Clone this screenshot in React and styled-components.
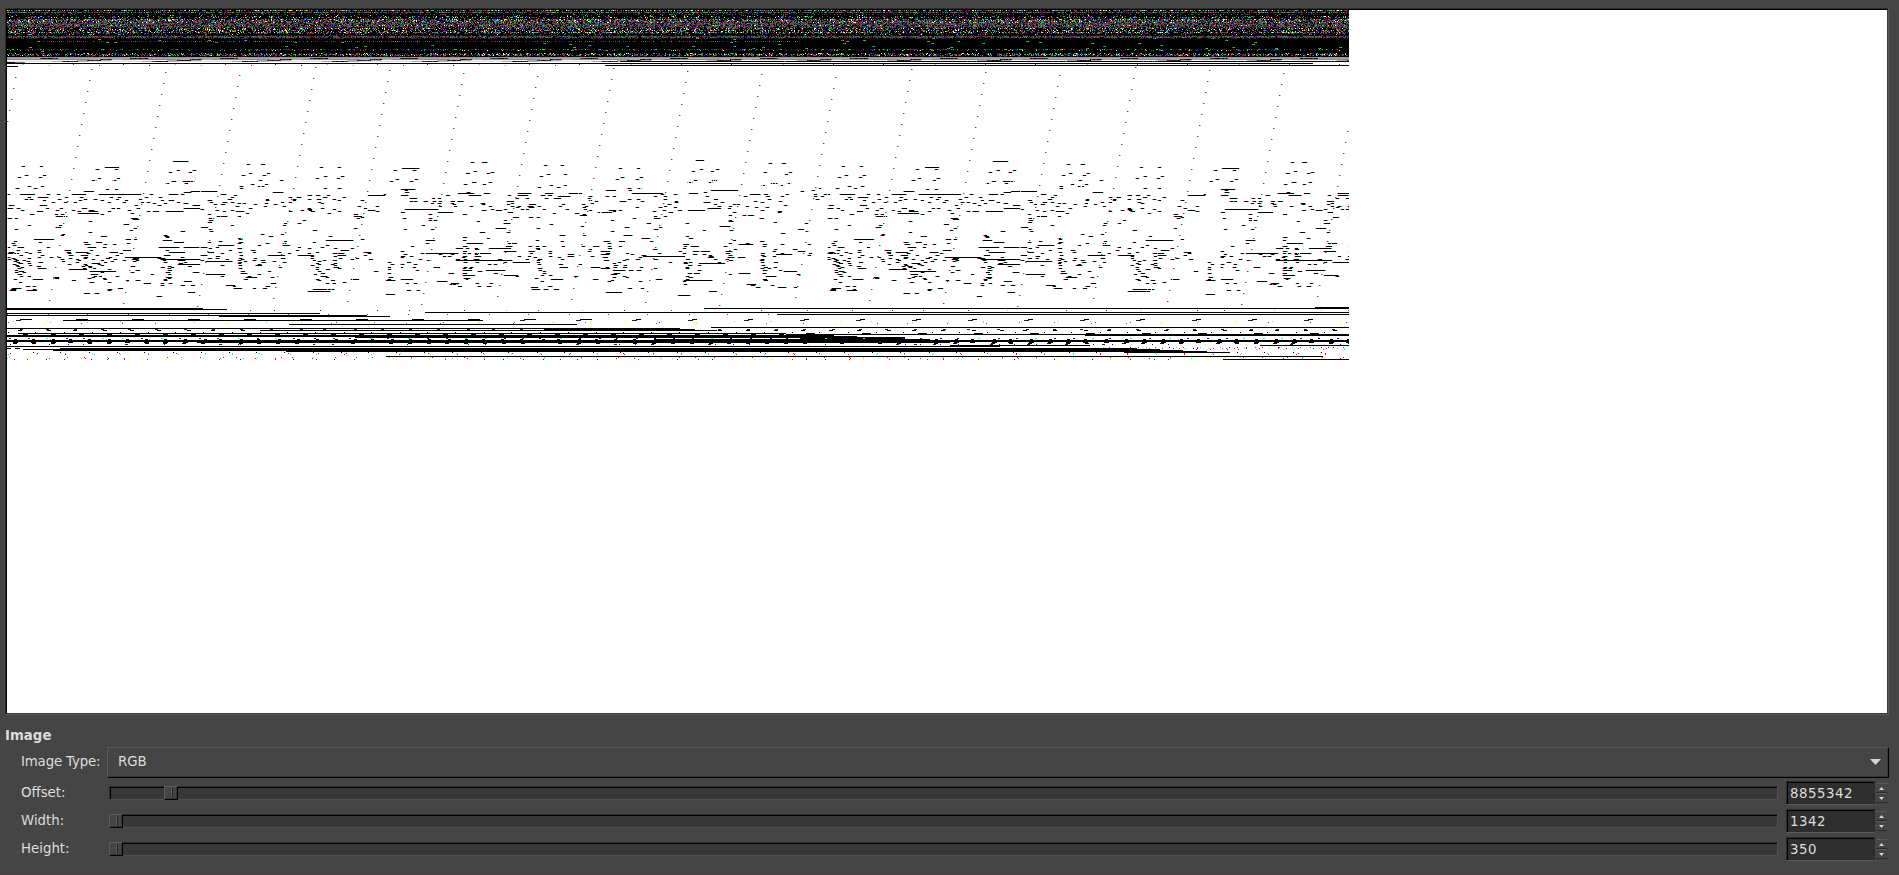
import React, { useMemo } from 'react';
import styled, { createGlobalStyle } from 'styled-components';

const Global = createGlobalStyle`
  html, body { margin: 0; padding: 0; background: #454545; }
  body { overflow: hidden; }
`;

const Window = styled.main`
  box-sizing: border-box;
  width: 1899px;
  height: 875px;
  padding: 8px 10px 0 5px;
  background: #454545;
  border-bottom: 1px solid #4a4044;
  color: #dcdcdc;
  font: 13.33px/16px 'DejaVu Sans', sans-serif;
`;

const Viewport = styled.section`
  box-sizing: border-box;
  width: 1884px;
  height: 707px;
  border: 1px solid;
  border-color: #2c2c2c #5a5a5a #5a5a5a #2c2c2c;
`;

const Sheet = styled.div`
  box-sizing: border-box;
  height: 705px;
  border: 1px solid;
  border-color: #000 #3c3c3c #3c3c3c #000;
  background: #fff;
`;

const Raster = styled.svg`
  display: block;
  shape-rendering: crispEdges;
`;

const Heading = styled.h2`
  margin: 13px 0 2px;
  height: 16px;
  font: bold 13.33px/16px 'DejaVu Sans', sans-serif;
`;

const Row = styled.div`
  display: flex;
  align-items: center;
  height: ${(p) => p.$h}px;
`;

const Label = styled.label`
  box-sizing: border-box;
  flex: none;
  width: ${(p) => p.$w}px;
  padding: 0 0 ${(p) => p.$lift || 0}px 16px;
  letter-spacing: ${(p) => (p.$tight ? '-0.15px' : 'normal')};
  white-space: nowrap;
`;

const Combo = styled.div`
  box-sizing: border-box;
  flex: 1;
  display: flex;
  align-items: center;
  justify-content: space-between;
  height: 31px;
  padding: 0 7px 2px 10px;
  border: 1px solid;
  border-color: #5a5a5a #000 #000 #5a5a5a;
  box-shadow: inset -1px -1px #363636;
`;

const Track = styled.div`
  box-sizing: border-box;
  flex: none;
  display: flex;
  width: 1669px;
  height: 14px;
  border: 1px solid;
  border-color: #2c2c2c #505050 #505050 #2c2c2c;
  background: #373737;
  box-shadow: inset 1px 1px #000;
`;

const Thumb = styled.div`
  box-sizing: border-box;
  display: flex;
  justify-content: center;
  width: 14px;
  height: 14px;
  margin: -1px 0 0 ${(p) => p.$at - 1}px;
  padding: 1px 0 0 2px;
  border: 1px solid;
  border-color: #5e5e5e #000 #000 #5e5e5e;
  background: #454545;
  box-shadow: inset -1px -1px #363636;
`;

const Notch = styled.i`
  box-sizing: border-box;
  width: 2px;
  height: 10px;
  border-left: 1px solid #5e5e5e;
  border-right: 1px solid #222;
`;

const Spin = styled.div`
  display: flex;
  align-items: center;
  gap: 1px;
  margin-left: 8px;
`;

const Field = styled.output`
  box-sizing: border-box;
  width: 89px;
  height: 24px;
  padding: 4px 0 0 3px;
  border: 1px solid;
  border-color: #2c2c2c #2e2e2e #5a5a5a #2c2c2c;
  background: #2e2e2e;
  box-shadow: inset 1px 1px #000;
  letter-spacing: 0.52px;
`;

const Steps = styled.div`
  display: flex;
  flex-direction: column;
`;

const Step = styled.span`
  box-sizing: border-box;
  display: flex;
  align-items: center;
  justify-content: center;
  width: 11px;
  height: 10px;
  border-top: 1px solid #5a5a5a;
  border-bottom: 1px solid #2a2a2a;
`;

// Recurring black runs. Each block: horizontal origin, vertical origin, then
// "y x,w x,w ..." rows in thirds of a pixel (default run is 12 long).
const RUNS = [
  [0, 60, `319 63 117|322 312,46|328 285 342|346 71 127|352 51 114|355 291 348|361 273 337|379 81 120|385 45 99|388 315 342`],
  [0, 60, `304 516,48|331 528 576|337 504 564|364 514,16 570|370 495 553`],
  [200, 60, `313 137 180,16|340 144 199|346 123 187|373 150 192|379 117 171|322 357 411|349 370 420|355 345 408|331 580|358 585|364 567`],
  [478, 1, `478 652,28|487 870 910,14|502 420 475|505 663 710|511 640 695|514 855 930|520 918|529 425 484|535 410 470|538 645 700|544 630 690|547 875,14 925|553 850 905|562 445,16 475`],
  [0, 180, `1 275 338|4 545,32|10 497|19 81 120|25 45 99|28 315 342|34 250,34 570,30|37 550,24|43 21,8 57,48 137 168 213,46 294,130 448 504,30 540|52 81 110,34 193 237 327 350 432 473|58 72 88 171 250 280 345 415|61 125 233 300 373 480 505,18|67 153 190 220 322 365 420 438 527|70 456 490 550,16|76 25,18 117,24 402 472 575,24|85 21,18 48 135 177 243,18 332 348 408 550,50|91 60 165 213 265,18 382|94 109,20 232,12 265,30 322 437 455,22 495,54|100 230,65 390|103 88,14 163 300 180|109 165,30 190|115 21,16 43 390,24|118 395,20|124 265|133 370,18|136 82 173|142 165,18|145 400|148 43|151 388|154 541,14|157 264|163 182|166 490 180|169 300,22 493,14|172 495|178 98,64 375,18 400|181 485,30|184 38|187 113 250,16 285,20 520,34|190 34 377|193 253,18 310 335|196 36|202 21,8 50,20 137 260,26 305 475,62 548,48|211 48 110 193,20 268 365,28 495|217 25,18 73 112 197,14 225,38 327,26 505,50|220 40,18 85 200 257 357 21,26|226 57 120 205,14 240,24 285,12 346 490,22|232 22,8 110,12 147 172 250,16 325 372,110 540|235 34 80 203 250 315,14 395,20 470,25|238 21 40 180 225 273,12 340 393,20 480,120|241 44 67 230 300,12 365 405 487 530,24|244 40 78 184 330 395|247 49 115,16 225 310 490 550|250 55,14 81 272,26 535,16|253 37 200 250 290 530,70|256 45 85 253 300|259 47 109,16 243 262,14 390,16 500 560,16|262 61 265 480,14 510|265 51 110,28 245 276,12 500|268 203,56 320|271 43 405,16 502,14|274 54,18 268,80|277 42 67 300 390 495,14 575,20|283 52,14 270,24 450,12 500,12|289 58 80 280 295,12 345|292 160,18 272,12 494,22|295 163,14 260 305,12 500|298 38 96,34 310 490|301 213,14 375,12 405,16 490|304 550,26|307 55 267,14 320|310 428,24 480 505|316 480 540,14 570,14|319 75,16 95|325 33,30 350,18|328 30,18 320,14 95|331 27,20 78,34 320|337 560,24|340 250,22 283,16|349 468,18`],
  [200, 180, `1 175 238|13 150 192|19 181|25 117 370 411|34 0,50|37 215,34|43 60,18 550,10|46 100 320,14 345,14 378 500,55|52 90 265 288,14 365,14 425|58 80,14 195 275 320 348,14 395|61 20,16 195 275 410 480|67 27 65,14 90 240 265 350|70 125 110 192 360|73 40 60,14 160 220|79 105 190 245,12 470 525,12|85 145 320 360 490|88 0 320,16 395|91 45 90 300 325 500,24|94 65 105,26 265 330,14 410,12 525,12|100 135 380|103 20 460,14|109 48 60,20 110 460,26|112 480|115 25,12 468|121 25,14 305|127 20,16|130 250 290|136 90 245|142 0,24|145 460|148 25|151 335,14|154 28|163 180 240|169 205,14 385|175 110 115|178 115,12 480|181 375,84|184 55,12 250|187 20 115,14 335|190 112,12 195 245,12|196 50,50 170 245,24 375,12|202 0,22 45,12 290,12 360|205 25 112,14 320 400 450,12|211 85,12 150,16 285 420,28|217 20,20 115 155 230 345 490,24|220 60 260 320 395,36 410,20 500|226 0,20 117 200,55 290,52 410,28 490|229 45,16 330 400|235 20,14 45,12 115 160 240,16 330 415 465|238 75 120,12 450 505,14|241 0,12 112 155 180,16 335 365 395,16|244 15,80 130 215 350|247 115 182,14 245 560|250 110 345,12 400|253 170 350 390 570|256 60 115 165,20 330 400|262 235,12 345 400,18 560|265 115 410,12|268 345,12 375,16 560|274 120,14 200 350,12 520,16|280 120,20 360,16 560|283 15,60 340 170|289 60 140,12 360,20|292 135,36 210 375 565,16|298 130,14 345,12 450,28 560|301 350 390,14 555,30|307 425|310 210,18 375 395|316 75,30|319 95,12 195,14|325 100,26 155 186,16|328 335,66 380,12|334 320,70|343 555,30`],
  [400, 150, `37 210 244,18|46 430 480|55 3,54|61 37|64 218,12|67 270|70 195,14 258|73 438 488|79 417|88 43|94 27,12|97 214,14 264|103 190 246|106 447 488|112 411 467|118 0,46|121 12|127 12,14 198|130 170,50 248,22 350,42 433,26 505,30 535|136 0,24 135,14 205,38 320 350,32 420,14 440,14|139 470,38 563|145 28,24 93 110 345 375 433 460,24 560|151 565|154 28 40 70,14 95 115 150,14 170,18 318,24 583|160 90 110 150 240,14 330,12 570|163 155 243 318,12 385,24 483 543|169 115 160 208 265 330 350 380,18 410,12 475 553|172 345 385,18 545|178 13,102 270,12 310,12 360 375 427,12 495 550|181 243,14 285,20 565|187 0,14 110,48 320,18 590|190 455,12 522,16|193 85 185,14 545|196 538,24|202 335,22 385,16 408|205 5 85|211 85,12 98 310,12|214 228|220 310,20|223 447|226 63|229 540|235 285,34 408|238 8 90|247 238,18 318|256 477,18 545|262 187,14|265 258|271 75,30 185 405|274 480|280 75 197,52 320 333,18|289 30 187,14 315,20 383 405 425,12 483 543 575,20|295 165,24 195 222 265,70 405,14|298 222,16 408,12 565|304 0,12 187,14 310,40 385,20 445 560|310 60 75,100 187 200,12 223,16 230,42 388 445|313 8 115 150 223 500,22|319 0,14 28,12 125,12 140 185,14 222,20 350 382 445 500,22 570|322 0 182 400 470|328 55 165,14 190,12 220,18 290,16 375 410,14 480,12|331 78,14 165,172 408,12|337 18,14 190 225 310 335,54 408|343 0 40 262,12 280 410 475,14 535|352 0,10 35,12 100,20 190,12 208,12 478,26 570,30|355 185 205 410,14|361 45,12 185,30 255,60 415|364 230,14 425|370 145,18 187,14 280,16 425|376 185,38 310,46 420 445|379 345,12 520,16|385 190,22 403|388 0,38 195,10 450,38 575,18|394 108,34 420|400 15 40 150,28 225 268|403 148,20 155,16|409 170,14 230 258,14 440,14|412 390,24|418 393,26 430,14 458,18|421 18,16 48`],
  [600, 180, `1 280 338|7 262 320|10 515,14 560|16 485 537|19 743|25 80 110 655,10|31 15,32 85 330,84 632|34 600,12|37 310,12|40 92,96 265,30|43 180,12 218 448,32 490,14 555,12 640,12 669|49 14 35 160 190,12 315,12 430 495,14 540 640 660|58 80 107 190 340,16 500 645|64 58,20 120 222 460 535|67 222 308,20 360 480|73 200,12 340 395 407,12|76 550|79 188 350 435 385|82 105 175 220 463,12 495|85 320,42 380|91 24,24 55 185,12 230,14 260,55 480|94 35,12 155 530,16|97 0,36 205,16 395 530|106 425,12 440,22 385|109 160 190|115 95 160,22 478,14|121 30 383|124 383,14|127 520|130 137,14 255,12 613|139 358,32|142 72,14 175|148 160,14 590,20|151 305,12 388|154 30 615|160 540,14|166 70,28|169 255,12|175 122,28 265,14|181 395,12|184 10,20 55,22 147 477,14|190 20 383 435|193 245,20 415,46 485,14 540,12 620|199 20 55 250 270,26 370 485|205 20,14 245|208 155,14 400 575,14 520|214 0,30 235,12 275,20 300,30 375,20 515 590,24|220 15,14 75 170,12 245 375,16 480,14 540 625|223 0,28 90 275,14 305 525,50|226 122,14 325,12 385 480 620|229 125,130 325,14 485 517|232 5,18 115 320,20 380,20 410,24|238 75 105,14 160,14 255,16 340 375 480|241 10,18 65,12 385,16 478,16|247 50 205,12 250 265,12 350 480 520,14|250 35,12 250,14 294,80|256 40,14 70,12 260,16 290 484,12|262 15 38 65,14 118 255 490,14 520|265 0,30 160 255,12 480 500|271 35,38 85,14 108,16 290,12 485,16 535|274 550,42|280 40,22 260,14 280,20 415,36 485|283 30,22 385 588|289 65 255,12 495,32|292 35,12 75 265,16|298 165,22 255,12 485,16|301 30 250,86 490,14|304 22,12 115 245|313 250 437,30|316 450,16 510|322 465,14 530,28 578|325 80,14 120|334 325,26|337 16,50|346 232,38`],
];

const CELL_W = 820;
const FULL_W = 1342;

function seeded(seed) {
  let s = seed;
  return () => {
    s = (s * 1664525 + 1013904223) >>> 0;
    return s / 4294967296;
  };
}

// Builds one path per colour, each pixel run being a small rectangle.
function buildRaster() {
  const layers = new Map();
  const put = (color, x, y, w = 1, h = 1) => {
    const left = Math.max(0, Math.round(x) - 7);
    const right = Math.min(FULL_W, Math.round(x) - 7 + w);
    if (right <= left) return;
    if (!layers.has(color)) layers.set(color, []);
    layers.get(color).push(`M${left} ${Math.round(y) - 10}h${right - left}v${h}h${left - right}z`);
  };
  const rnd = seeded(4711);
  const pick = (a) => a[Math.floor(rnd() * a.length)];

  // encoded header: noise bands
  put('#010101', 7, 10, FULL_W, 47);
  const vivid = ['#f22', '#1e2', '#22f', '#0d4', '#c12', '#0cf', '#fff', '#fe2', '#82f', '#2a2', '#22b', '#a32'];
  const muted = ['#523', '#254', '#335', '#716', '#373', '#338', '#833', '#555', '#2a4', '#41a', '#857', '#311', '#b23', '#282'];
  const dim = ['#411', '#232', '#224', '#333', '#421', '#145'];
  const bands = {
    10: [0.65, vivid], 11: [0.3, dim], 12: [0.8, muted.concat(vivid.slice(0, 6))], 13: [0.07, muted], 14: [0.25, muted],
    15: [0.06, vivid], 16: [0.22, vivid], 17: [0.32, vivid], 18: [0.2, muted], 19: [0.6, vivid],
    20: [0.7, muted.concat(vivid)], 21: [0.7, muted.concat(vivid)], 22: [0.65, muted.concat(vivid)], 23: [0.8, muted], 24: [0.8, muted], 25: [0.65, muted.concat(vivid)],
    26: [0.8, muted], 27: [0.6, muted], 28: [0.5, vivid], 29: [0.3, vivid], 30: [0.45, vivid], 31: [0.3, vivid],
    32: [0.6, vivid], 33: [0.3, muted], 34: [0.1, vivid], 35: [0.3, dim], 36: [0.85, muted], 37: [0.8, muted],
    38: [0.3, dim], 49: [0.45, dim.concat(vivid.slice(0, 4))], 50: [0.12, vivid], 53: [0.3, vivid],
    54: [0.5, vivid], 55: [0.5, muted.concat(vivid)], 56: [0.2, dim],
  };
  Object.entries(bands).forEach(([row, [density, colors]]) => {
    for (let x = 7; x < 1349; x += 1) {
      if (rnd() < density) put(pick(colors), x, Number(row));
    }
  });
  for (let x = 35; x < 800; x += 2) if (rnd() < 0.75) put(pick(muted.concat(['#0c4', '#c22', '#22e', '#999'])), x, 41);
  for (let i = 0; i < 70; i += 1) {
    const x = 10 + rnd() * 1330;
    const y = 38 + Math.floor(rnd() * 14);
    put(pick(['#3a3', '#284', '#26c', '#973']), x, y, 2);
    put('#6c6', x + 2, y);
  }

  // greys settling towards white
  put('#999297', 7, 57, FULL_W);
  put('#a9a5a8', 7, 58, FULL_W);
  put('#8b878b', 7, 59, FULL_W);
  put('#f4f4f4', 7, 60, FULL_W);
  put('#ddd', 7, 61, FULL_W);
  const blob = (x, y, w) => {
    put('#aaa', x - 10, y, w + 20);
    put('#555', x - 4, y, w + 8);
    for (let i = 0; i < w; i += 1) put(pick(['#111', '#000', '#222', '#533', '#446']), x + i, y);
  };
  for (let x = 62; x < 1349; x += 90) {
    blob(x, 61, 16);
    blob(x + 25, 60, 14);
    blob(x - 22, 58, 18);
    blob(x + 38, 59, 12);
  }
  put('#111', 7, 62, 8);
  put('#777', 15, 62, 10);
  put('#000', 7, 63, 1306);
  put('#000', 620, 61, 729);
  put('#000', 605, 65, 744);
  put('#000', 7, 66, 11);
  for (let x = 22, n = 0; x < 1349; x += 50.67, n += 1) {
    const c = ['#ff0', '#f00', '#00c'][n % 3];
    put(c, x, 64);
    if (n % 3 === 0) put('#0ff', x + 1, 64);
    if (x < 580) {
      put(c, x + 26, 65);
      if (n % 3 === 0) put('#0ff', x + 27, 65);
    }
  }

  // slanted red and cyan markers
  for (let a = -3; a < 22; a += 1) {
    for (let b = -12; b < 26; b += 1) {
      const x = 15 + 74 * a - 2 * b;
      const y = 77 + 3 * a + 11 * b;
      if (y > 66 && y < 307 && x >= 7) {
        put('#f00', x, y);
        put('#0ff', x + 1, y);
      }
    }
  }

  // dashed records
  RUNS.forEach(([ox, oy, text]) => {
    text.split('|').forEach((line) => {
      const [yText, ...items] = line.split(' ');
      const y = oy + Math.floor(Number(yText) / 3);
      items.forEach((item) => {
        const [xs, ws] = item.split(',').map(Number);
        const x = ox + Math.round(xs / 3);
        if (x >= 827) return;
        const w = Math.max(3, Math.round((ws || 12) / 3));
        [0, CELL_W].forEach((shift) => {
          put(pick(['#f99', '#f66', '#fbb']), x + shift, y);
          put('#300', x + 1 + shift, y);
          put('#000', x + 2 + shift, y, Math.max(1, w - 2));
          put(pick(['#0cc', '#5ff', '#9ff']), x + w + shift, y);
        });
      });
    });
  });

  // solid rules: row, start, end
  [
    [308, 7, 203], [309, 7, 227], [313, 7, 320], [315, 7, 367], [316, 219, 390], [312, 425, 1349],
    [308, 704, 1349], [307, 1315, 1349], [314, 777, 1349], [320, 63, 483], [324, 289, 577],
    [328, 7, 680], [328, 400, 670], [329, 544, 693], [330, 260, 717], [327, 711, 1349],
    [333, 18, 786], [334, 786, 1349], [335, 7, 834], [336, 7, 857], [337, 355, 905], [335, 1085, 1349],
    [338, 800, 905], [339, 654, 930], [340, 7, 1349], [341, 7, 1349], [342, 197, 950],
    [345, 950, 1090], [345, 1260, 1349], [346, 7, 1000], [348, 60, 1137], [349, 23, 1160], [350, 53, 1183],
    [351, 286, 1207], [352, 1124, 1230], [348, 7, 11], [348, 15, 20], [356, 386, 1323], [359, 1223, 1349],
  ].forEach(([y, a, b]) => put('#000', a, y, b - a));

  const scatter = (row, step, jitter, colors, w = 1, from = 7, to = 1349) => {
    for (let x = from; x < to; x += step) put(pick(colors), x + rnd() * jitter, row, w);
  };
  const spots = ['#f00', '#0ff', '#ff0', '#00f', '#d0d'];
  scatter(310, 43, 22, ['#f00', '#0ff', '#00f'], 1, 230);
  scatter(314, 40, 2, ['#f00'], 1, 7, 770);
  scatter(321, 36, 8, ['#0ff', '#ff0']);
  scatter(322, 36, 8, ['#0ff', '#ff0', '#d0d']);
  scatter(323, 36, 8, ['#ff0', '#d0d']);
  scatter(338, 19, 3, ['#222', '#00c', '#0ff'], 2);
  scatter(344, 19, 6, ['#ff0', '#00d', '#ff0']);
  scatter(332, 28, 1, ['#000']);
  scatter(352, 28, 1, ['#000'], 1, 32);
  scatter(353, 28, 3, ['#0ff', '#f00']);
  scatter(354, 28, 3, ['#0ff', '#f00']);
  scatter(357, 19, 8, ['#ff0', '#0ff', '#f00', '#f00']);
  scatter(358, 19, 8, ['#f00', '#0ff', '#ff0']);
  scatter(359, 19, 8, ['#00f', '#f00', '#ff0'], 1, 7, 1220);
  scatter(347, 9, 8, spots, 1, 1090);
  scatter(348, 7, 6, spots, 1, 1140);
  scatter(349, 12, 10, ['#f00', '#ff0', '#0ff'], 1, 1170);

  for (let x = 12; x < 1349; x += 18.8) {
    const j = rnd() * 4;
    put('#000', x + j, 339, 3);
    put('#000', x - 1 + j, 342, 5);
    if (rnd() < 0.7) put('#000', x + 1, 343, 4);
    if (rnd() < 0.3) put('#222', x, 344, 3);
  }
  for (let x = 15; x < 1349; x += 28) {
    put('#000', x + rnd() * 5, 330, 4);
    put('#222', x + rnd() * 5, 329, 3);
    put('#000', x + 8, 334, 5);
  }
  for (let x = 20; x < 1349; x += 56) {
    put('#000', x, 319, x < 600 ? 12 : 5);
    put('#222', x - 4, 320, 5);
    put('#000', x + 2, 333, 9);
  }
  return [...layers].map(([color, parts]) => [color, parts.join('')]);
}

function RawImage() {
  const layers = useMemo(buildRaster, []);
  return (
    <Raster width={FULL_W} height={350} viewBox="0 0 1342 350">
      {layers.map(([color, d]) => (
        <path key={color} d={d} fill={color} />
      ))}
    </Raster>
  );
}

function Arrow({ w, h, up }) {
  return (
    <svg width={w} height={h} viewBox="0 0 10 10" preserveAspectRatio="none">
      <path d={up ? 'M0 10L5 0L10 10z' : 'M0 0L5 10L10 0z'} fill="#d4d4d4" />
    </svg>
  );
}

function SliderRow({ label, value, at }) {
  return (
    <Row $h={28}>
      <Label $w={104}>{label}</Label>
      <Track>
        <Thumb $at={at}>
          <Notch />
        </Thumb>
      </Track>
      <Spin>
        <Field>{value}</Field>
        <Steps>
          <Step><Arrow w={5} h={3} up /></Step>
          <Step><Arrow w={5} h={3} /></Step>
        </Steps>
      </Spin>
    </Row>
  );
}

export default function App() {
  return (
    <Window>
      <Global />
      <Viewport>
        <Sheet>
          <RawImage />
        </Sheet>
      </Viewport>
      <Heading>Image</Heading>
      <Row $h={33}>
        <Label $w={102} $lift={2} $tight>Image Type:</Label>
        <Combo>
          RGB
          <Arrow w={11} h={6} />
        </Combo>
      </Row>
      <SliderRow label="Offset:" value="8855342" at={55} />
      <SliderRow label="Width:" value="1342" at={0} />
      <SliderRow label="Height:" value="350" at={0} />
    </Window>
  );
}
